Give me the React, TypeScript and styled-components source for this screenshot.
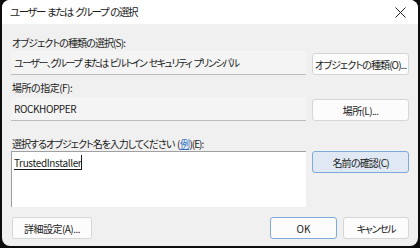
import React from "react";
import styled, { createGlobalStyle } from "styled-components";

const Global = createGlobalStyle`
  html, body { margin: 0; padding: 0; background: #0c0c0c; }
  body { width: 420px; height: 248px; overflow: hidden; }
  * { box-sizing: border-box; }
`;

const Window = styled.div`
  margin: 0 2px 2px 2px;
  width: 416px;
  height: 246px;
  border-radius: 8px;
  overflow: hidden;
  background: #f0f0f0;
  font-family: "Noto Sans CJK JP", "Noto Sans", sans-serif;
  font-feature-settings: "palt" 1;
  font-size: 10px;
  color: #1a1a1a;
  display: flex;
  flex-direction: column;
`;

const TitleBar = styled.div`
  height: 24px;
  flex: 0 0 24px;
  background: #ffffff;
  display: flex;
  align-items: center;
  justify-content: space-between;
  padding: 0 12px 0 8px;
`;

const Title = styled.span`
  font-size: 10.5px;
  line-height: 14px;
  letter-spacing: -1.5px;
  word-spacing: 1.5px;
  color: #1a1a1a;
`;

const Body = styled.div`
  flex: 1;
  padding: 0 9px 0 9px;
  display: flex;
  flex-direction: column;
`;

const Label = styled.div<{ $top: number; $ls?: number }>`
  margin-top: ${(p) => p.$top}px;
  height: 14px;
  line-height: 14px;
  padding-left: 1px;
  white-space: nowrap;
  letter-spacing: ${(p) => p.$ls ?? 0}px;
  word-spacing: 1.5px;
`;

const Row = styled.div<{ $top: number; $align: string }>`
  margin-top: ${(p) => p.$top}px;
  display: flex;
  gap: 6px;
  align-items: ${(p) => p.$align};
`;

const Field = styled.div<{ $ls?: number }>`
  width: 296px;
  height: 24px;
  background: #f4f4f4;
  border-bottom: 1px solid #bcbcbc;
  display: flex;
  align-items: center;
  padding-left: 3px;
  white-space: nowrap;
  overflow: hidden;
  letter-spacing: ${(p) => p.$ls ?? 0}px;
  word-spacing: 1.5px;
`;

const TextArea = styled.div`
  width: 296px;
  height: 56px;
  background: #ffffff;
  border-top: 1px solid #a0a0a0;
  border-left: 1px solid #a0a0a0;
  padding: 3px 0 0 2px;
  letter-spacing: -0.35px;
`;

const Typed = styled.span`
  text-decoration: underline;
  text-underline-offset: 2px;
  border-right: 1px solid #1a1a1a;
  line-height: 16px;
`;

const Button = styled.div<{ $w: number; $default?: boolean; $tint?: boolean; $ls?: number }>`
  width: ${(p) => p.$w}px;
  height: 22px;
  border-radius: 3px;
  border: 1px solid ${(p) => (p.$default ? "#7fa9d8" : "#d6d6d6")};
  background: ${(p) => (p.$tint ? "#dfe8f3" : "#fcfcfc")};
  display: flex;
  align-items: center;
  justify-content: center;
  white-space: nowrap;
  font-size: 10px;
  letter-spacing: ${(p) => p.$ls ?? 0}px;
  color: #1a1a1a;
`;

const Link = styled.span`
  color: #2f6fc4;
  text-decoration: underline;
  margin: 0 0.5px;
`;

const Footer = styled.div`
  margin-top: 10px;
  display: flex;
  gap: 6px;
  padding-left: 1px;
`;

const Spacer = styled.div`
  flex: 1;
`;

const Close = () => (
  <svg width="11" height="11" viewBox="0 0 11 11">
    <path d="M0.5 0.5 L10.5 10.5 M10.5 0.5 L0.5 10.5" stroke="#222" strokeWidth="1" />
  </svg>
);

export default function App() {
  return (
    <>
      <Global />
      <Window>
        <TitleBar>
          <Title>ユーザー または グループ の選択</Title>
          <Close />
        </TitleBar>
        <Body>
          <Label $top={12} $ls={-0.9}>
            オブジェクトの種類の選択(S):
          </Label>
          <Row $top={1} $align="flex-end">
            <Field $ls={-1.5}>ユーザー、グループ または ビルトイン セキュリティ プリンシパル</Field>
            <Button $w={97} $ls={-0.9}>
              オブジェクトの種類(O)...
            </Button>
          </Row>
          <Label $top={6} $ls={-0.5}>
            場所の指定(F):
          </Label>
          <Row $top={2} $align="flex-end">
            <Field $ls={-0.4}>ROCKHOPPER</Field>
            <Button $w={97} $ls={-0.6}>
              場所(L)...
            </Button>
          </Row>
          <Label $top={16} $ls={-1}>
            選択するオブジェクト名を入力してください (<Link>例</Link>)(E):
          </Label>
          <Row $top={0} $align="flex-start">
            <TextArea>
              <Typed>TrustedInstaller</Typed>
            </TextArea>
            <Button $w={97} $default $tint $ls={-0.8}>
              名前の確認(C)
            </Button>
          </Row>
          <Footer>
            <Button $w={80} $ls={-0.5}>
              詳細設定(A)...
            </Button>
            <Spacer />
            <Button $w={67} $default>
              OK
            </Button>
            <Button $w={66} $ls={-1.3}>
              キャンセル
            </Button>
          </Footer>
        </Body>
      </Window>
    </>
  );
}
